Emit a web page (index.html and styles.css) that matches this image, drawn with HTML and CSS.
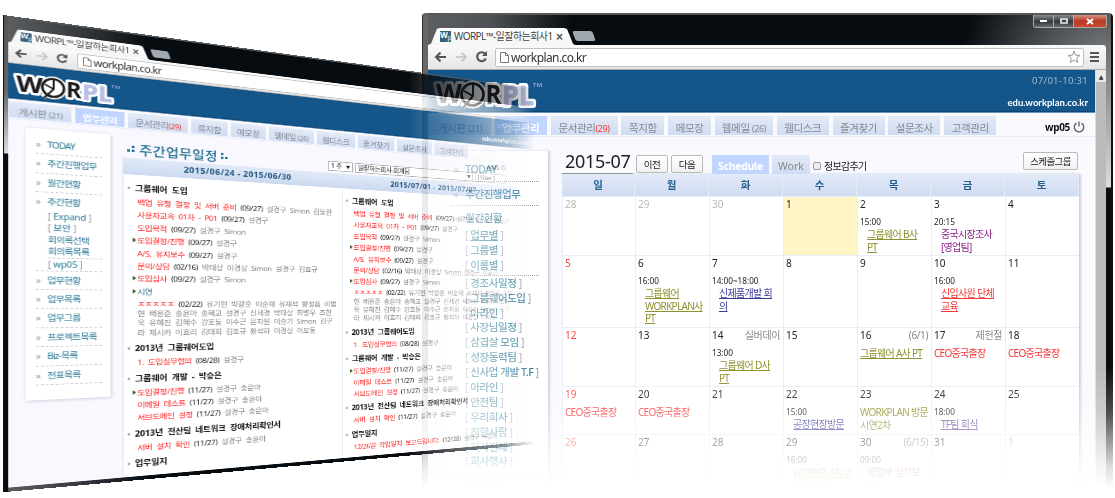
FILE: index.html
```html
<!DOCTYPE html>
<html lang="ko">
<head>
<meta charset="utf-8">
<title>WORPL</title>
<link rel="stylesheet" href="styles.css">
</head>
<body>
<svg width="0" height="0" class="defs">
  <symbol id="logo" viewBox="0 0 108 34">
    <g font-family="Open Sans, sans-serif" font-weight="700" font-size="26">
      <g fill="#fff" stroke="#fff" stroke-width="6" stroke-linejoin="round">
        <text x="4" y="25" textLength="26" lengthAdjust="spacingAndGlyphs">W</text>
        <circle cx="40.500" cy="16.500" r="11"/><path d="M30 29 40 17"/>
        <text x="53.500" y="26" textLength="16" lengthAdjust="spacingAndGlyphs">R</text>
        <text x="70" y="27" textLength="32" lengthAdjust="spacingAndGlyphs">PL</text>
      </g>
      <g fill="#b9c0e6" stroke="#b9c0e6" stroke-width=".6"><text x="70" y="27" textLength="32" lengthAdjust="spacingAndGlyphs">PL</text></g>
      <g fill="#1d1b1c">
        <text x="4" y="25" textLength="26" lengthAdjust="spacingAndGlyphs">W</text>
        <text x="53.500" y="26" textLength="16" lengthAdjust="spacingAndGlyphs">R</text>
      </g>
    </g>
    <g fill="none" stroke="#1d1b1c" stroke-width="2.600">
      <circle cx="40.500" cy="16.500" r="11"/>
      <path d="M31 30 41 18V6M41 18l-9-5" stroke-width="2"/>
    </g>
  </symbol>
  <symbol id="nav-icons" viewBox="0 0 60 20">
    <g fill="none" stroke="#555" stroke-width="2.100">
      <path d="M8 10h10M12.500 5.500 8 10l4.500 4.500"/>
      <path d="M28 10h10M33.500 5.500 38 10l-4.500 4.500" stroke="#c2c2c2" stroke-width="1.700"/>
      <path d="M57.300 7A4.500 4.500 0 1 0 57.800 11.500"/>
    </g>
    <path d="M54 9h5V4z" fill="#555"/>
  </symbol>
  <symbol id="page-icon" viewBox="0 0 9 11">
    <path d="M.5.5h5l3 3v7h-8zM5.500.500v3h3" fill="#fff" stroke="#777"/>
  </symbol>
  <symbol id="power" viewBox="0 0 12 12">
    <path d="M3.500 2.200a4.700 4.700 0 1 0 5 0M6 .5v5" fill="none" stroke="#666" stroke-width="1.400"/>
  </symbol>
</svg>

<section class="window calendar-window">
  <header class="titlebar">
    <div class="browser-tab"><span class="favicon">W<i>p</i></span><span class="tab-title">WORPL™-일잘하는회사1</span><span class="tab-x">×</span></div>
    <span class="new-tab"></span>
    <div class="win-buttons">
      <span><svg width="9" height="4"><path d="M1 1h7v2H1z" fill="#fff"/></svg></span>
      <span><svg width="8" height="6"><path d="M1 1h6v4H1z" fill="none" stroke="#eee" stroke-width="1.600"/></svg></span>
      <span class="close"><svg width="8" height="7"><path d="m1 1 6 5M7 1 1 6" stroke="#fff" stroke-width="1.900"/></svg></span>
    </div>
  </header>
  <div class="toolbar">
    <svg class="nav-icons"><use href="#nav-icons"/></svg>
    <div class="address"><svg class="page-icon"><use href="#page-icon"/></svg><span>workplan.co.kr</span>
      <svg class="star" width="14" height="14" viewBox="0 0 14 14"><path d="m7 1 1.600 4.200 4.400.2-3.400 2.800 1.200 4.300L7 10l-3.800 2.500 1.200-4.300L1 5.400l4.400-.2z" fill="none" stroke="#999"/></svg>
    </div>
    <span class="menu"><i></i><i></i><i></i></span>
  </div>
  <div class="viewport">
    <div class="page">
      <div class="brandbar">
        <svg class="logo"><use href="#logo"/></svg><span class="tm">TM</span>
        <div class="brand-info"><span>07/01-10:31</span><b>edu.workplan.co.kr</b></div>
      </div>
      <nav class="menu-tabs">
        <span style="width:62px">게시판 <small>(21)</small></span><span class="on" style="width:52px">업무관리</span><span style="width:67px">문서관리<small class="red">(29)</small></span><span style="width:43px">쪽지함</span><span style="width:43px">메모장</span><span style="width:58px">웹메일 <small>(26)</small></span><span style="width:52px">웹디스크</span><span style="width:52px">즐겨찾기</span><span style="width:52px">설문조사</span><span style="width:52px">고객관리</span>
        <div class="user"><b>wp05</b><svg width="12" height="12"><use href="#power"/></svg></div>
      </nav>
      <div class="cal-content">
        <aside class="cal-side">
          <div class="entry">TODAY</div>
          <div class="entry">주간진행업무</div>
          <div class="entry head">월간현황</div>
          <p>[ <b><u>업무별</u></b> ]</p><p>[ <b>그룹별</b> ]</p><p class="ruled">[ <b>이름별</b> ]</p>
          <p>[ <b>경조사일정</b> ]</p><p>[ <b>그룹웨어도입</b> ]</p><p>[ <b>아라인</b> ]</p><p>[ <b>사장님일정</b> ]</p><p>[ <b>삼겹살 모임</b> ]</p><p>[ <b>성장동력팀</b> ]</p><p>[ <b>신사업 개발 T.F</b> ]</p><p>[ <b>아라인</b> ]</p><p>[ <b>안전팀</b> ]</p><p>[ <b>우리회사</b> ]</p><p>[ <b>진한사람</b> ]</p><p>[ <b>회사전체</b> ]</p><p class="last">[ <b>회사행사</b> ]</p>
          <div class="entry">주간현황</div>
        </aside>
        <main class="cal-main">
          <div class="cal-bar">
            <h1>2015-07</h1><button>이전</button><button>다음</button>
            <span class="mode on">Schedule</span><span class="mode">Work</span>
            <label><i></i>정보감추기</label><button class="group">스케줄그룹</button>
          </div>
          <div class="cal">
            <div class="dow">일</div><div class="dow">월</div><div class="dow">화</div><div class="dow">수</div><div class="dow">목</div><div class="dow">금</div><div class="dow">토</div>

            <div class="day off">28</div><div class="day off">29</div><div class="day off">30</div><div class="day today">1</div>
            <div class="day">2<time>15:00</time><a class="olive">그룹웨어 B사<br>PT</a></div>
            <div class="day">3<time>20:15</time><a class="purple">중국시장조사<br>[영업팀]</a></div>
            <div class="day">4</div>

            <div class="day sun">5</div>
            <div class="day">6<time>16:00</time><a class="olive">그룹웨어<br>WORKPLAN사<br>PT</a></div>
            <div class="day">7<time>14:00~18:00</time><a class="navy">신제품개발 회<br>의</a></div>
            <div class="day">8</div><div class="day">9</div>
            <div class="day">10<time>16:00</time><a class="redlink">신입사원 단체<br>교육</a></div>
            <div class="day">11</div>

            <div class="day sun">12</div><div class="day">13</div>
            <div class="day">14<em>실버데이</em><time>13:00</time><a class="olive">그룹웨어 D사<br>PT</a></div>
            <div class="day">15</div>
            <div class="day">16<em>(6/1)</em><a class="olive all">그룹웨어 A사 PT</a></div>
            <div class="day">17<em>제헌절</em><a class="trip all">CEO중국출장</a></div>
            <div class="day">18<a class="trip all">CEO중국출장</a></div>

            <div class="day sun">19<a class="trip all">CEO중국출장</a></div>
            <div class="day">20<a class="trip all">CEO중국출장</a></div>
            <div class="day">21</div>
            <div class="day">22<time>15:00</time><a class="navy">공장현장방문</a></div>
            <div class="day">23<a class="olive plain all">WORKPLAN 방문<br>시연2차</a></div>
            <div class="day">24<time>18:00</time><a class="violet">TF팀 회식</a></div>
            <div class="day">25</div>

            <div class="day sun">26</div><div class="day">27</div><div class="day">28</div>
            <div class="day">29<time>16:00</time><a class="olive">WORKPLAN 방<br>문시연3차</a></div>
            <div class="day">30<em>(6/15)</em><time>09:00</time><a class="purple">영업부 실적보<br>고</a></div>
            <div class="day">31</div><div class="day off">1</div>
          </div>
        </main>
      </div>
    </div>
    <div class="scrollbar"><i></i></div>
  </div>
</section>

<section class="window weekly-window">
  <header class="titlebar">
    <div class="browser-tab"><span class="favicon">W<i>p</i></span><span class="tab-title">WORPL™-일잘하는회사1</span><span class="tab-x">×</span></div>
    <span class="new-tab"></span>
  </header>
  <div class="toolbar">
    <svg class="nav-icons"><use href="#nav-icons"/></svg>
    <div class="address"><svg class="page-icon"><use href="#page-icon"/></svg><span>workplan.co.kr</span></div>
  </div>
  <div class="viewport">
    <div class="page">
      <div class="brandbar">
        <svg class="logo"><use href="#logo"/></svg><span class="tm">TM</span>
        <div class="brand-info"><span>07/01-10:31</span><b>edu.workplan.co.kr</b></div>
      </div>
      <nav class="menu-tabs">
        <span style="width:62px">게시판 <small>(21)</small></span><span class="on" style="width:52px">업무관리</span><span style="width:67px">문서관리<small class="red">(29)</small></span><span style="width:43px">쪽지함</span><span style="width:43px">메모장</span><span style="width:58px">웹메일 <small>(26)</small></span><span style="width:52px">웹디스크</span><span style="width:52px">즐겨찾기</span><span style="width:52px">설문조사</span><span style="width:52px">고객관리</span>
      </nav>
      <div class="week-content">
        <aside class="week-side">
          <div>TODAY</div><div>주간진행업무</div><div>월간현황</div>
          <div class="open">주간현황<p>[ <b>Expand</b> ]</p><p>[ <b>보안</b> ]</p><p><b>회의록선택</b></p><p class="dash"><b>회의록목록</b></p><p class="tall">[ <b>wp05</b> ]</p></div>
          <div>업무현황</div><div>업무목록</div><div>업무그룹</div><div>프로젝트목록</div><div>Biz-목록</div><div>전표목록</div>
        </aside>
        <main class="week-main">
          <div class="week-bar"><svg width="9" height="10"><path d="M0 6h3v3H0zM5 1h3v3H5zM5 6h3v3H5z" fill="#23708f"/></svg><h1>주간업무일정</h1><svg width="9" height="10"><path d="M0 1h3v3H0zM0 6h3v3H0zM5 6h3v3H5z" fill="#23708f"/></svg>
            <div class="filters"><span class="sel s1">1 주 <i>▼</i></span><span class="sel s2">일잘하는회사-회계팀 <i>▼</i></span><span class="sel s3">[ User ]</span><span class="who">wp05 <svg width="9" height="9"><use href="#power"/></svg></span></div>
          </div>
          <div class="weeks">
            <div class="week">
              <h2>2015/06/24 - 2015/06/30</h2>
              <h3>그룹웨어 도입</h3>
              <p><a>백업 유형 결정 및 서버 준비</a> <b>(09/27)</b> 설경구 Simon 김동완</p>
              <p><a>사용자교육 01차 - P01</a> <b>(09/27)</b> 설경구</p>
              <p><a>도입목적</a> <b>(09/27)</b> 설경구 Simon</p>
              <p class="tri"><a>도입결정/진행</a> <b>(09/27)</b> 설경구</p>
              <p><a>A/S, 유지보수</a> <b>(09/27)</b> 설경구</p>
              <p><a>문의/상담</a> <b>(02/16)</b> 박태상 이경상 Simon 설경구 김효규</p>
              <p class="tri"><a>도입심사</a> <b>(09/27)</b> 설경구 Simon</p>
              <p class="tri"><a class="blue">시연</a></p>
              <div class="people"><a>ㅈㅈㅈㅈㅈ</a> <b>(02/22)</b> 유기현 박광훈 이순재 유재석 황정음 이범<br>현 배용준 송윤아 송혜교 설경구 신세경 박태상 최병우 조한<br>욱 유혜진 김혜수 강호동 이수근 은지원 이승기 Simon 김구<br>라 제시카 이효리 김태희 김호규 황석하 이경상 이모동</div>
              <h3>2013년 그룹웨어도입</h3>
              <p><a>1. 도입실무협의</a> <b>(08/28)</b> 설경구</p>
              <h3>그룹웨어 개발 - 박승은</h3>
              <p class="tri"><a>도입결정/진행</a> <b>(11/27)</b> 설경구 송윤아</p>
              <p><a>이메일 테스트</a> <b>(11/27)</b> 설경구 송윤아</p>
              <p><a>서브도메인 설정</a> <b>(11/27)</b> 설경구 송윤아</p>
              <h3>2013년 전산팀 네트워크 장애처리확인서</h3>
              <p><a>서버 설치 확인</a> <b>(11/27)</b> 설경구 송윤아</p>
              <h3>업무일지</h3>
            </div>
            <div class="week">
              <h2>2015/07/01 - 2015/07/07</h2>
              <h3>그룹웨어 도입</h3>
              <p><a>백업 유형 결정 및 서버 준비</a> <b>(09/27)</b> 설경구 Simon 김동완</p>
              <p><a>사용자교육 01차 - P01</a> <b>(09/27)</b> 설경구</p>
              <p><a>도입목적</a> <b>(09/27)</b> 설경구 Simon</p>
              <p class="tri"><a>도입결정/진행</a> <b>(09/27)</b> 설경구</p>
              <p><a>A/S, 유지보수</a> <b>(09/27)</b> 설경구</p>
              <p><a>문의/상담</a> <b>(02/16)</b> 박태상 이경상 Simon 설경구 김효규</p>
              <p class="tri"><a>도입심사</a> <b>(09/27)</b> 설경구 Simon</p>
              <div class="people"><a>ㅈㅈㅈㅈㅈ</a> <b>(02/22)</b> 유기현 박광훈 이순재 유재석 황정음 이범<br>현 배용준 송윤아 송혜교 설경구 신세경 박태상 최병우 조한<br>욱 유혜진 김혜수 강호동 이수근 은지원 이승기 Simon 김구<br>라 제시카 이효리 김태희 김호규 황석하 이경상 이모동</div>
              <h3>2013년 그룹웨어도입</h3>
              <p><a>1. 도입실무협의</a> <b>(08/28)</b> 설경구</p>
              <h3>그룹웨어 개발 - 박승은</h3>
              <p class="tri"><a>도입결정/진행</a> <b>(11/27)</b> 설경구 송윤아</p>
              <p><a>이메일 테스트</a> <b>(11/27)</b> 설경구 송윤아</p>
              <p><a>서브도메인 설정</a> <b>(11/27)</b> 설경구 송윤아</p>
              <h3>2013년 전산팀 네트워크 장애처리확인서</h3>
              <p><a>서버 설치 확인</a> <b>(11/27)</b> 설경구 송윤아</p>
              <h3>업무일지</h3>
              <p><a>12/26일 작업일지 보고드립니다.</a> <b>(12/28)</b> 설경구 박광훈</p>
            </div>
          </div>
        </main>
      </div>
    </div>
  </div>
</section>
</body>
</html>
```
FILE: styles.css
```css
* { box-sizing: border-box; }
html, body { margin: 0; width: 1115px; height: 498px; overflow: hidden; background: #fff; }
body { position: relative; font-family: "Noto Sans", "Noto Sans CJK KR", sans-serif; font-size: 11px; color: #222; }
h1, h2, h3, p { margin: 0; }
i, em { font-style: normal; }
.defs { position: absolute; }

/* Browser windows placed on the canvas */
.window { position: absolute; display: flex; flex-direction: column; overflow: hidden; }
.calendar-window {
  left: 422px; top: 13px; width: 691px; height: 485px; padding: 0 7px 0 6px;
  border-radius: 3px 4px 0 0;
  background:
    linear-gradient(90deg, #333 0 1px, #0000 1px) no-repeat left top / 6px 100%,
    linear-gradient(90deg, #0000 5px, #111 5px) no-repeat right top / 7px 100%,
    linear-gradient(#555, #aaa 110px, #ddd 174px, #0a0e12 175px) no-repeat right top / 7px 100%,
    linear-gradient(#666, #777) no-repeat left top / 6px 100%,
    radial-gradient(circle at 100% 70px, #777a7c 30px, #0000 155px) no-repeat 0 0 / 100% 50px,
    linear-gradient(90deg, #5e6163, #4c5054 70px, #070c11 150px 500px, #090d12);
  -webkit-mask-image: linear-gradient(#000 355px, #000b 400px, #0006 430px, #0002 455px, #0000 475px);
  mask-image: linear-gradient(#000 355px, #000b 400px, #0006 430px, #0002 455px, #0000 475px);
}
.weekly-window {
  left: 3px; top: 15px; width: 692px; height: 575px; padding: 0 7px 5px 5px;
  transform-origin: 0 0;
  transform: matrix3d(1.0393, .143, 0, .000496, 0, .83, 0, 0, 0, 0, 1, 0, 0, 0, 0, 1);
  background:
    linear-gradient(90deg, #111 0 1.500px, #0000 1.500px) no-repeat left top / 5px 100%,
    linear-gradient(#555, #666 90px, #ddd 166px, #0a0e12 167px) no-repeat left top / 5px 100%,
    linear-gradient(90deg, #5e6163, #34383c 80px, #070c11 150px);
  -webkit-mask-image: linear-gradient(90deg, #000 485px, #000c 520px, #0008 590px, #0005 645px, #0000 685px);
  mask-image: linear-gradient(90deg, #000 485px, #000c 520px, #0008 590px, #0005 645px, #0000 685px);
}

/* Browser chrome */
.titlebar { height: 32px; flex: none; display: flex; align-items: flex-end; border-top: 2px solid #55595b; }
.browser-tab {
  width: 147px; height: 17px; padding: 0 10px 0 12px; display: flex; align-items: center;
  background: linear-gradient(#fff, #f5f5f5);
  clip-path: polygon(0 100%, 3px 92%, 9px 5%, 12px 0, 136px 0, 139px 6%, 145px 92%, 100% 100%);
}
.favicon { width: 11px; height: 11px; background: #35617a; color: #fff; font: bold 8px/8px "Open Sans", sans-serif; display: flex; letter-spacing: -.5px; }
.favicon i { font-size: 7px; color: #a8c4d8; padding-top: 3px; }
.tab-title { margin-left: 3px; font-size: 10px; line-height: 15px; letter-spacing: -.55px; white-space: nowrap; color: #444; width: 96px; }
.tab-x { margin-left: 6px; font: bold 12px/12px "Liberation Sans", sans-serif; color: #555; }
.new-tab { width: 20px; height: 10px; margin: 0 0 4px -1px; background: #a0a8b0; border-radius: 2px; transform: skewX(20deg); }
.weekly-window .new-tab { margin-left: 2px; }
.win-buttons { margin: 0 -1px auto auto; display: flex; height: 13px; border: 1px solid #aaa; border-top: 0; border-radius: 0 0 3px 3px; overflow: hidden; }
.win-buttons span { width: 20px; display: grid; place-items: center; background: linear-gradient(#888b8e, #33383d 55%, #666b70); border-right: 1px solid #aaa; }
.win-buttons .close { width: 32px; border: 0; background: linear-gradient(#d69483, #b93a26 50%, #c84b31); }
.toolbar { height: 25px; flex: none; display: flex; align-items: center; background: linear-gradient(#fafafa, #e6e6e6); border-bottom: 1px solid #aaa; border-radius: 0 3px 0 0; }
.nav-icons { width: 60px; height: 20px; flex: none; }
.address { flex: none; width: 589px; height: 19px; margin-left: 7px; padding-left: 5px; display: flex; align-items: center; border: 1px solid #c0c0c0; border-radius: 2px; background: #fff; font: 12px/17px "Noto Sans", sans-serif; letter-spacing: -.7px; color: #333; }
.calendar-window .address { padding-left: 4px; letter-spacing: -.6px; }
.weekly-window .address { width: 604px; margin-left: 9px; }
.page-icon { width: 9px; height: 11px; margin-right: 2px; }
.star { margin: 0 2px 0 auto; }
.menu { width: 9px; margin-left: 6px; display: grid; gap: 2px; }
.menu i { height: 2px; background: #555; }

/* Site header */
.viewport { flex: 1; min-height: 0; display: flex; overflow: hidden; }
.page { flex: 1; min-width: 0; background: #f9f9fe; overflow: hidden; }
.brandbar { height: 43px; display: flex; background: #15568a; border-bottom: 1px solid #6792b6; box-shadow: inset 0 -1px #0d4676; }
.logo { width: 108px; height: 34px; margin: 8px 0 0 4px; flex: none; }
.tm { margin: 11px 0 0 -7px; font: 6px/8px "Noto Sans", sans-serif; color: #b8c6e7; letter-spacing: .5px; }
.brand-info { margin-left: auto; padding: 4px 7px 0 0; display: flex; flex-direction: column; align-items: flex-end; line-height: 14px; font-size: 9.500px; color: #9cb9d0; }
.brand-info span { letter-spacing: .3px; }
.brand-info b { margin-top: 8px; font: bold 9.500px/14px "Lato", sans-serif; color: #fff; letter-spacing: 0; }
.menu-tabs { height: 24px; padding: 3px 0 1px 1px; display: flex; gap: 4px; border-bottom: 1px solid #e4ecf9; white-space: nowrap; }
.menu-tabs > span { flex: none; padding-top: 4px; text-align: center; background: linear-gradient(#e4eaf7, #cfdcf2); color: #858991; font-size: 10.500px; line-height: 17px; letter-spacing: -.4px; overflow: hidden; }
.menu-tabs > .on { background: #c1d6ff; color: #fff; font-weight: bold; }
.menu-tabs small { font-size: 9px; }
.red { color: #f33; }
.user { margin-left: auto; padding: 2px 10px 0 0; display: flex; align-items: center; gap: 3px; font-size: 10px; letter-spacing: -.3px; color: #111; }
.calendar-window .menu-tabs { gap: 3.800px; }

/* Calendar page */
.scrollbar { width: 11px; background: #e9e9e9; display: flex; flex-direction: column; border-left: 1px solid #ddd; }
.scrollbar i { flex: 1; margin-top: 12px; background: #bbb; }
.scrollbar::before { content: "▲"; height: 0; font: 6px/13px "DejaVu Sans", sans-serif; text-align: center; color: #333; }
.cal-content { display: flex; }
.cal-side { width: 105px; height: 420px; margin: 14px 14px 0 15px; padding: 6px 9px 0 8px; background: #fff; box-shadow: 2px 0 2px #ccd; font-size: 10.500px; color: #8ba; letter-spacing: -.45px; white-space: nowrap; }
.entry { height: 24.500px; padding-left: 14px; line-height: 24px; border-bottom: 1px dotted #999; color: #277795; font-weight: 500; }
.entry::before { content: "»"; margin-left: -12px; padding-right: 7px; color: #aaa; }
.entry.head { height: 22px; border: 0; }
.cal-side p { height: 14.900px; padding-left: 14px; line-height: 15px; color: #99a; }
.cal-side p b { font-weight: 500; color: #277795; }
.cal-side .ruled { height: 18px; border-bottom: 1px dotted #999; }
.cal-side .last { height: 20px; border-bottom: 1px dotted #999; }
.cal-main { width: 518px; padding-top: 14px; }
.cal-bar { height: 23px; display: flex; align-items: flex-start; white-space: nowrap; }
.cal-bar h1 { width: 71px; height: 23px; padding-left: 3px; border-bottom: 1px solid #999; font: 18px/21px "Noto Sans", sans-serif; letter-spacing: -.3px; }
.cal-bar button { width: 32px; height: 18px; margin: 4px 0 0 3px; padding: 0; border: 1px solid #bbb; border-radius: 2px; background: linear-gradient(#fff, #f1f1f1); font: 9.500px/14px "Noto Sans CJK KR", sans-serif; letter-spacing: -.6px; color: #222; }
.mode { width: 38px; height: 19px; margin: 4px 0 0 3px; padding-top: 1px; background: linear-gradient(#e4eaf7, #cfdcf2); color: #888; text-align: center; font: 10.500px/21px "Noto Sans", sans-serif; overflow: hidden; }
.mode.on { width: 57px; margin-left: 9px; background: #c1d6ff; color: #fff; font-weight: bold; letter-spacing: -.3px; }
.cal-bar label { display: flex; align-items: center; gap: 3px; margin: 7px 0 0 3px; font-size: 10px; letter-spacing: -.7px; }
.cal-bar label i { width: 8px; height: 8px; border: 1px solid #999; border-radius: 2px; background: #eee; }
.cal-bar .group { width: 55px; margin: 1px 2px 0 auto; }
.cal { display: grid; grid-template-columns: 73px repeat(6, 74px); grid-template-rows: 22px 59px 72px 59px 48px 65px; width: 517px; background: #fff; box-shadow: 2px 0 2px #ccd; }
.dow { background: linear-gradient(#e2eaf8, #d0dcf1); border-right: 1px solid #e4ecf8; text-align: center; font: bold 10.500px/22px "Noto Sans CJK KR", sans-serif; color: #23608e; }
.day { min-width: 0; overflow: hidden; padding: 0 3px 0 2px; border: solid #e7edf9; border-width: 1px 0 0 1px; font-size: 10px; line-height: 14px; white-space: nowrap; }
.off { color: #bbb; }
.sun { color: #f44; }
.today { background: #fff5c5; }
.day em { float: right; color: #888; letter-spacing: -.4px; }
.day time { display: block; margin-top: 5px; font-size: 8.200px; line-height: 12px; }
.day a { display: block; margin-left: 7px; line-height: 12.500px; letter-spacing: -.7px; text-decoration: underline; text-underline-offset: 1px; }
.day .all { margin: 5px 0 0; }
.day a.purple, .day a.trip, .day a.plain { text-decoration: none; }
.olive { color: #8f902f; } .purple { color: #8d248b; } .navy { color: #3c3b99; } .violet { color: #6746a0; } .redlink, .trip { color: #f43838; }

/* Weekly report page */
.week-content { display: flex; height: 447px; background: #f8f8fe; }
.week-side { width: 87px; height: 333px; margin: 9px 13px 0 17px; padding: 8px 9px 0 10px; background: #fff; box-shadow: 1px 1px 4px #ccd; font-size: 10px; letter-spacing: -.7px; line-height: 22px; color: #277795; white-space: nowrap; font-weight: 400; }
.week-side > div { height: 23.400px; border-bottom: 1px dashed #ccc; padding-left: 12px; }
.week-side > div::before { content: "»"; margin-left: -12px; padding-right: 7px; color: #999; }
.week-side .open { height: 96.500px; }
.week-side p { height: 14.300px; line-height: 14.300px; color: #999; letter-spacing: -.2px; }
.week-side p b { font-weight: 400; color: #277795; }
.week-side .open p:nth-child(3), .week-side .open p:nth-child(4) { letter-spacing: -.7px; }
.week-side .open .dash { height: 16px; border-bottom: 1px dashed #ccc; }
.week-side .tall { line-height: 15px; }
.week-main { width: 543px; padding-top: 12px; }
.week-bar { height: 25px; display: flex; align-items: center; padding-left: 5px; white-space: nowrap; }
.week-bar h1 { margin: 0 4px; font: 500 16px/24px "Noto Sans CJK KR", sans-serif; letter-spacing: .3px; color: #23708f; }
.filters { display: flex; gap: 3px; margin: 4px 0 0 127px; }
.sel { height: 14px; border: 1px solid #aaa; background: #fff; padding: 0 3px; font-size: 9px; line-height: 12px; letter-spacing: -.3px; display: flex; justify-content: space-between; color: #222; }
.sel i { font-size: 6px; }
.s1 { width: 34px; } .s2 { width: 176px; } .s3 { width: 50px; }
.who { font-size: 8px; margin: -16px 0 0 -34px; }
.weeks { display: grid; grid-template-columns: 267px 267px; height: 415px; border-left: 1px solid #d5e0f5; background: #fff; }
.week { border-right: 1px solid #dce5f8; padding: 0 0 0 15px; white-space: nowrap; overflow: hidden; color: #888; font-size: 9.500px; letter-spacing: -.45px; word-spacing: 2.700px; }
.week h2 { height: 21px; margin: 0 0 6px -15px; background: linear-gradient(#e2eaf8, #cbd9f0); text-align: center; font: bold 10.500px/21px "Noto Sans", sans-serif; letter-spacing: .4px; word-spacing: 0; color: #235a83; }
.week h3 { height: 22px; margin-left: -2px; font-size: 10px; line-height: 22px; color: #111; letter-spacing: -.2px; }
.week h3::before { content: "•"; margin-left: -9px; padding-right: 5px; color: #aaa; }
.week p { height: 16.400px; line-height: 16.400px; }
.week a { color: #f22; }
.week .blue { color: #23708f; }
.week b { font-weight: 400; color: #222; word-spacing: 0; }
.tri::before { content: ""; display: inline-block; border: solid transparent; border-width: 3px 0 3px 4px; border-left-color: #386438; margin: 0 1px 1px -5px; }
.people { height: 53px; padding-top: 1.600px; line-height: 12.300px; }
```
